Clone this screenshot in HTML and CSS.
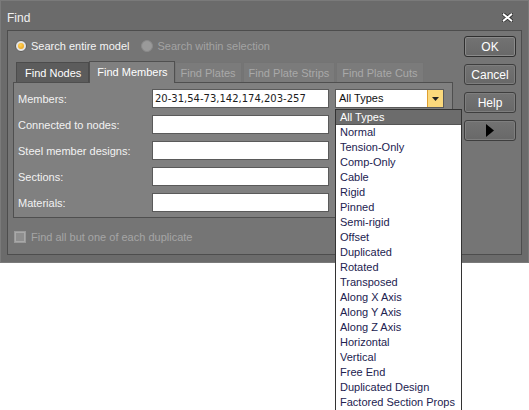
FILE: index.html
```html
<!DOCTYPE html>
<html>
<head>
<meta charset="utf-8">
<link rel="stylesheet" href="styles.css">
</head>
<body>
<div class="dialog">
  <div class="titlebar">
    <span class="title">Find</span>
    <svg class="close" width="11" height="9" viewBox="0 0 11 9">
      <path d="M1.8 1.5 L9.2 7.5 M9.2 1.5 L1.8 7.5" stroke="#2a2a2a" stroke-width="3.6" stroke-linecap="square"/>
      <path d="M1.8 1.5 L9.2 7.5 M9.2 1.5 L1.8 7.5" stroke="#ffffff" stroke-width="2" stroke-linecap="square"/>
    </svg>
  </div>
  <div class="inner">
    <div class="left">
      <div class="radios">
        <label class="radio"><span class="dot on"></span>Search entire model</label>
        <label class="radio disabled"><span class="dot off"></span>Search within selection</label>
      </div>
      <div class="tabs">
        <div class="tab dark">Find Nodes</div>
        <div class="tab active">Find Members</div>
        <div class="tab dis">Find Plates</div>
        <div class="tab dis">Find Plate Strips</div>
        <div class="tab dis">Find Plate Cuts</div>
      </div>
      <div class="panel">
        <div class="row">
          <span class="lbl">Members:</span>
          <div class="input mono">20-31,54-73,142,174,203-257</div>
          <div class="combo"><span class="combo-text">All Types</span><span class="combo-btn"><svg width="7" height="4" viewBox="0 0 7 4"><path d="M0 0 H7 L3.5 4 Z" fill="#222"/></svg></span></div>
        </div>
        <div class="row"><span class="lbl">Connected to nodes:</span><div class="input"></div></div>
        <div class="row"><span class="lbl">Steel member designs:</span><div class="input"></div></div>
        <div class="row"><span class="lbl">Sections:</span><div class="input"></div></div>
        <div class="row"><span class="lbl">Materials:</span><div class="input"></div></div>
      </div>
      <label class="check"><span class="box"></span>Find all but one of each duplicate</label>
    </div>
    <div class="buttons">
      <div class="btn default">OK</div>
      <div class="btn">Cancel</div>
      <div class="btn">Help</div>
      <div class="btn"><svg width="8" height="13" viewBox="0 0 8 13"><path d="M0 0 L8 6.5 L0 13 Z" fill="#000"/></svg></div>
    </div>
  </div>
  <ul class="list">
    <li class="sel">All Types</li>
    <li>Normal</li>
    <li>Tension-Only</li>
    <li>Comp-Only</li>
    <li>Cable</li>
    <li>Rigid</li>
    <li>Pinned</li>
    <li>Semi-rigid</li>
    <li>Offset</li>
    <li>Duplicated</li>
    <li>Rotated</li>
    <li>Transposed</li>
    <li>Along X Axis</li>
    <li>Along Y Axis</li>
    <li>Along Z Axis</li>
    <li>Horizontal</li>
    <li>Vertical</li>
    <li>Free End</li>
    <li>Duplicated Design</li>
    <li>Factored Section Props</li>
  </ul>
</div>
</body>
</html>
```

FILE: styles.css
```css
* { box-sizing: border-box; }
html, body { margin: 0; padding: 0; background: #ffffff; }
body {
  font-family: "Liberation Sans", Arial, sans-serif;
  font-size: 11px;
  color: #f2f2f2;
  width: 529px;
  height: 410px;
  overflow: hidden;
}
.dialog {
  position: relative;
  width: 529px;
  height: 263px;
  background: #6b6b6b;
  border: 1px solid #7a7a7a;
  padding: 0 6px 0 6px;
}
.titlebar {
  height: 29px;
  display: flex;
  align-items: center;
  justify-content: space-between;
  padding-top: 4px;
}
.title { font-size: 12px; color: #f0f0f0; }
.close { margin-right: 9px; }
.inner {
  height: 225px;
  border: 1px solid #4d4d4d;
  background: #757575;
  display: flex;
  padding: 0 5px 0 5px;
  gap: 11px;
}
.left { width: 440px; flex-shrink: 0; display: flex; flex-direction: column; }
.radios {
  display: flex;
  align-items: center;
  height: 16px;
  margin-top: 7px;
  gap: 12px;
}
.radio { display: flex; align-items: center; gap: 4px; color: #f4f4f4; white-space: nowrap; }
.radio.disabled { color: #a3a3a3; }
.radio:first-child { margin-left: 2px; }
.dot {
  width: 12px; height: 12px; border-radius: 50%;
  border: 1px solid #5a5a5a;
  background: #e4e4e4;
  position: relative;
  flex-shrink: 0;
}
.dot.on::after {
  content: ""; position: absolute; left: 2px; top: 2px;
  width: 6px; height: 6px; border-radius: 50%;
  background: radial-gradient(circle at 40% 35%, #ffd25a, #e89b10);
}
.dot.off { background: #9a9a9a; border-color: #8a8a8a; }
.tabs {
  display: flex;
  align-items: flex-end;
  height: 21px;
  margin-top: 7px;
  padding-left: 3px;
  position: relative;
  z-index: 1;
}
.tab {
  height: 20px;
  padding: 0 6px;
  display: flex;
  align-items: center;
  white-space: nowrap;
  flex-shrink: 0;
  border: 1px solid #5e5e5e;
  border-bottom: none;
}
.tab.dark { background: #5c5c5c; color: #ffffff; border-color: #4c4c4c; padding: 0 7px 0 8px; }
.tab.active {
  height: 22px;
  margin-bottom: -1px;
  background: #808080;
  color: #ffffff;
  border-color: #505050;
  padding: 0 6px 1px 7px;
}
.tab.dis { background: #7b7b7b; color: #a9a9a9; border-color: #747474; margin-right: 1px; padding: 0 5px; }
.panel {
  height: 136px;
  background: #808080;
  border: 1px solid #4f4f4f;
  padding: 6px 8px 0 4px;
  display: flex;
  flex-direction: column;
  gap: 7px;
}
.row { display: flex; align-items: center; height: 19px; }
.lbl { width: 134px; flex-shrink: 0; color: #f2f2f2; white-space: nowrap; }
.input {
  width: 177px; height: 19px;
  flex-shrink: 0;
  background: #ffffff;
  border: 1px solid #5a5a5a;
  color: #1c1c1c;
  padding: 2px 0 0 2px;
  white-space: nowrap;
}
.mono { font-family: "DejaVu Sans", Verdana, sans-serif; font-size: 10px; padding-top: 3px; }
.combo {
  margin-left: 6px;
  width: 109px; height: 19px;
  flex-shrink: 0;
  background: #ffffff;
  border: 1px solid #5a5a5a;
  display: flex;
  align-items: stretch;
}
.combo-text { flex: 1; color: #111; padding: 2px 0 0 3px; }
.combo-btn {
  width: 16px;
  background: #fbd97c;
  border-left: 1px solid #e0a030;
  display: flex; align-items: center; justify-content: center;
}
.check {
  display: flex; align-items: center; gap: 5px;
  margin-top: 13px;
  margin-left: 1px;
  color: #a5a5a5;
}
.box {
  width: 12px; height: 12px;
  border: 1px solid #9a9a9a;
  background: #8e8e8e;
  box-shadow: inset 0 0 0 1px #a8a8a8;
}
.buttons {
  display: flex;
  flex-direction: column;
  gap: 7px;
  padding-top: 5px;
}
.btn {
  width: 52px; height: 21px;
  border: 1px solid #3e3e3e;
  border-radius: 3px;
  background: linear-gradient(#737373, #686868);
  box-shadow: inset 0 0 0 1px #7e7e7e;
  color: #ffffff;
  font-size: 12px;
  display: flex; align-items: center; justify-content: center;
}
.btn.default { border-color: #2f2f2f; box-shadow: inset 0 0 0 1px #8a8a8a; }
.list {
  position: absolute;
  left: 334px;
  top: 108px;
  width: 127px;
  height: 302px;
  margin: 0;
  padding: 0;
  list-style: none;
  background: #ffffff;
  border: 1px solid #333333;
  z-index: 5;
}
.list li {
  height: 15px;
  line-height: 15px;
  padding-left: 4px;
  color: #222250;
  white-space: nowrap;
}
.list li.sel {
  background: #6c6c6c;
  color: #ffffff;
  border-bottom: 1px solid #555;
  line-height: 14px;
}
```
